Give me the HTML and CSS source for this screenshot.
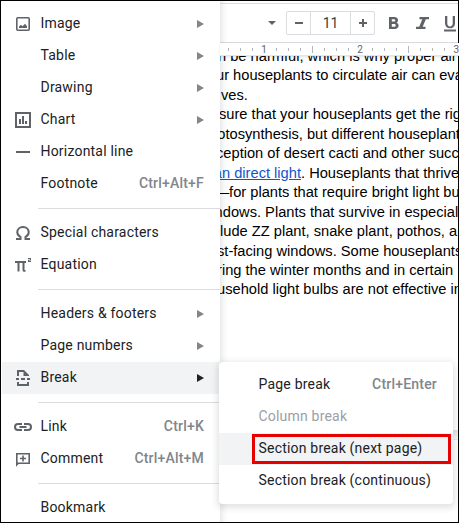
FILE: index.html
```
<!DOCTYPE html>
<html lang="en">
<head>
  <meta charset="UTF-8">
  <meta name="viewport" content="width=device-width, initial-scale=1.0">
  <title>Document</title>
  <link rel="stylesheet" href="styles.css">
</head>
<body>
  <div class="window">
    <div class="editor">
      <div class="toolbar">
        <svg class="caret" width="8" height="4" viewBox="0 0 8 4"><path d="M0 0h8L4 4z"/></svg>
        <div class="font-size">
          <button><svg width="10" height="10" viewBox="0 0 10 10"><path d="M1 5h8"/></svg></button>
          <span>11</span>
          <button><svg width="10" height="10" viewBox="0 0 10 10"><path d="M1 5h8M5 1v8"/></svg></button>
        </div>
        <svg class="format" width="80" height="24" viewBox="0 0 80 24">
          <path fill-rule="evenodd" d="M9 6h5.300c2.200 0 3.700 1.200 3.700 3.200 0 1.100-.6 2-1.400 2.500 1.200.5 2 1.500 2 2.800 0 2.100-1.600 3.500-3.900 3.500H9zM11.800 8.300v2.300H14c.8 0 1.200-.5 1.200-1.200s-.4-1.100-1.200-1.100zM11.800 13v2.700h2.500c.9 0 1.400-.5 1.400-1.300s-.5-1.400-1.400-1.400z"/>
          <path d="M39.500 6H49v2.300h-3.200L42.700 15.700h2.800V18H36v-2.300h3.200l3.100-7.400h-2.800z"/>
          <path d="M65 5h2.300v7.200c0 2 1 3.200 2.700 3.200s2.700-1.200 2.700-3.200V5H75v7.300c0 3.100-2 5-5 5s-5-1.900-5-5zM64 18.500h12v2H64z"/>
        </svg>
      </div>
      <div class="ruler">
        <i></i><i></i><i></i><b>1</b><i></i><i></i><i></i><i class="half"></i><i></i><i></i><i></i><b>2</b><i></i><i></i><i></i><i class="half"></i><i></i><i></i><i></i><b>3</b>
      </div>
      <div class="page">
        <p>n be harmful, which is why proper air</p>
        <p>ur houseplants to circulate air can eva</p>
        <p>ves.</p>
        <p>sure that your houseplants get the rig</p>
        <p>otosynthesis, but different houseplant</p>
        <p>ception of desert cacti and other succ</p>
        <p><a>an direct light</a>. Houseplants that thrive</p>
        <p>—for plants that require bright light bu</p>
        <p>ndows. Plants that survive in especial</p>
        <p>lude ZZ plant, snake plant, pothos, a</p>
        <p>st-facing windows. Some houseplants</p>
        <p>ring the winter months and in certain</p>
        <p>usehold light bulbs are not effective in</p>
      </div>
      <div class="page-gap"></div>
    </div>

    <!-- Insert menu -->
    <div class="menu">
      <div class="item">
        <svg class="icon" viewBox="0 0 18 18"><rect x="2.800" y="2.800" width="12.400" height="12.400" rx="1" class="line"/><path d="M5 13v-1.500L7 9.700l1.500 1.500L11 8.800l2 2.400V13z"/></svg>
        <span>Image</span><em class="arrow"></em>
      </div>
      <div class="item"><span>Table</span><em class="arrow"></em></div>
      <div class="item"><span>Drawing</span><em class="arrow"></em></div>
      <div class="item">
        <svg class="icon" viewBox="0 0 18 18"><path class="line thick" d="M2 2h14v14H2z"/><path d="M5 8h2v5H5zM8 5h2v8H8zM11 10h2v3h-2z"/></svg>
        <span>Chart</span><em class="arrow"></em>
      </div>
      <div class="item">
        <svg class="icon" viewBox="0 0 18 18"><path d="M2 8h14v2H2z"/></svg>
        <span>Horizontal line</span>
      </div>
      <div class="item"><span>Footnote</span><kbd>Ctrl+Alt+F</kbd></div>
      <hr>
      <div class="item">
        <svg class="icon" viewBox="0 0 18 18"><path class="line thick" d="M2 15h4.500v-2C4.500 12 3.300 10.500 3.300 8.300 3.300 5 5.800 3 9 3s5.700 2 5.700 5.300c0 2.200-1.200 3.700-3.200 4.700v2H16"/></svg>
        <span>Special characters</span>
      </div>
      <div class="item">
        <svg class="icon" viewBox="0 0 18 18"><path d="M1 5h11v2h-1.500v6.500c0 .5.300.7 1 .5v1.700c-2 .4-3-.3-3-2V7H5.500v8.500h-2V7H1zM14 2h3v2.500h-2V5h2v1h-3V3.700h2V3h-2z"/></svg>
        <span>Equation</span>
      </div>
      <hr>
      <div class="item"><span>Headers &amp; footers</span><em class="arrow"></em></div>
      <div class="item"><span>Page numbers</span><em class="arrow"></em></div>
      <div class="item active">
        <svg class="icon" viewBox="0 0 18 18"><path d="M3 7V1h7l5 5v1h-5.500V3H5v4zM2 9h3v2H2zM7 9h4v2H7zM13 9h3v2h-3zM3 13h2v2h8v-2h2v4H3z"/></svg>
        <span>Break</span><em class="arrow"></em>
      </div>
      <hr>
      <div class="item">
        <svg class="icon" viewBox="0 0 18 18"><path class="line thick" d="M8 6H4a3 3 0 0 0 0 6h4M10 6h4a3 3 0 0 1 0 6h-4M5.500 9h7"/></svg>
        <span>Link</span><kbd>Ctrl+K</kbd>
      </div>
      <div class="item">
        <svg class="icon" viewBox="0 0 18 18"><path class="line" d="M2.800 14.500V3.800h12.400v9.400H4z"/><path d="M2 16.500V13h3.500zM8.200 5.500h1.600v2.200H12v1.600H9.800v2.200H8.200V9.300H6V7.700h2.200z"/></svg>
        <span>Comment</span><kbd>Ctrl+Alt+M</kbd>
      </div>
      <hr>
      <div class="item"><span>Bookmark</span></div>
    </div>

    <div class="submenu">
      <div class="item"><span>Page break</span><kbd>Ctrl+Enter</kbd></div>
      <div class="item disabled"><span>Column break</span></div>
      <div class="item active highlight"><span>Section break (next page)</span></div>
      <div class="item"><span>Section break (continuous)</span></div>
    </div>
  </div>
</body>
</html>
```
FILE: styles.css
```
* {
  box-sizing: border-box;
}

body {
  margin: 0;
  background: #fff;
}

.window {
  position: relative;
  width: 459px;
  height: 523px;
  overflow: hidden;
  font-family: Roboto, "Liberation Sans", sans-serif;
  font-size: 14px;
  color: #202124;
}

/* frame drawn over everything */
.window::after {
  content: "";
  position: absolute;
  inset: 0;
  border: 1px solid #000;
}

.editor {
  height: 523px;
  padding: 3px 0 0 220px;
  display: flex;
  flex-direction: column;
}

/* toolbar */
.toolbar {
  flex: none;
  display: flex;
  align-items: center;
  height: 40px;
  padding-left: 48px;
  border-top: 1px solid #dadce0;
  border-bottom: 1px solid #dadce0;
  fill: #5f6368;
}

.caret {
  flex: none;
  margin-right: 10px;
}

.font-size {
  flex: none;
  display: flex;
  width: 89px;
  height: 24px;
  border: 1px solid #dadce0;
  border-radius: 2px;
}

.font-size button {
  flex: 1;
  display: flex;
  align-items: center;
  justify-content: center;
  padding: 0;
  border: none;
  background: none;
  stroke: #5f6368;
  stroke-width: 2;
}

.font-size span {
  width: 41px;
  line-height: 22px;
  text-align: center;
  color: #3c4043;
  border-left: 1px solid #dadce0;
  border-right: 1px solid #dadce0;
}

.format {
  flex: none;
  margin-left: 5px;
}

/* ruler */
.ruler {
  flex: none;
  display: flex;
  align-items: center;
  height: 13px;
  padding-left: 2px;
  overflow: hidden;
  background: #fff;
  border-bottom: 1px solid #e3e5e8;
  z-index: 1;
  box-shadow: 0 1px 2px rgba(60, 64, 67, 0.15);
}

.ruler i,
.ruler b {
  flex: none;
  display: flex;
  justify-content: center;
  width: 12.03px;
  font-size: 10px;
  font-weight: normal;
  color: #5f6368;
}

.ruler i::before {
  content: "";
  width: 1px;
  height: 3px;
  background: #b4b7bb;
}

.ruler .half::before {
  height: 7px;
}

/* document text */
.page {
  flex: none;
  height: 383px;
  margin-top: -9px;
  width: 233px;
  font-family: Arial, "Liberation Sans", sans-serif;
  font-size: 14.667px;
  line-height: 19.45px;
  white-space: nowrap;
  color: #000;
}

.page p {
  margin: 0 0 0 -4px;
}

.page p:nth-child(1) { margin-left: -2px; }
.page p:nth-child(3) { margin-left: 1px; }
.page p:nth-child(4) { margin-left: -1px; }
.page p:nth-child(5) { margin-left: -2.7px; }
.page p:nth-child(7) { margin-left: -6.2px; }
.page p:nth-child(8) { margin-left: -5.6px; }
.page p:nth-child(9) { margin-left: -5.4px; }
.page p:nth-child(10) { margin-left: 0; }
.page p:nth-child(11),
.page p:nth-child(12),
.page p:nth-child(13) { margin-left: -3px; }

.page a {
  color: #1155cc;
  text-decoration: underline;
}

.page-gap {
  flex: none;
  height: 10px;
  background: linear-gradient(#dfe1e4, #f8f9fa);
  border-bottom: 1px solid #e8eaed;
}

/* menus */
.menu,
.submenu {
  position: absolute;
  background: #fff;
  box-shadow: 0 2px 6px 2px rgba(60, 64, 67, 0.15);
}

.menu {
  top: -1px;
  left: 0;
  width: 220px;
  height: 540px;
  padding: 9px 0 0 2px;
}

.item {
  display: flex;
  align-items: center;
  height: 32px;
  padding: 0 16px 0 38.5px;
  letter-spacing: 0.2px;
  white-space: nowrap;
}

.item span {
  flex: 1;
  margin-top: -2px;
}

.item.active {
  background: #f1f3f4;
}

.icon {
  width: 18px;
  height: 18px;
  margin: 0 8.5px 0 -26.5px;
  fill: #5f6368;
}

.icon .line {
  fill: none;
  stroke: #5f6368;
  stroke-width: 1.6;
}

.icon .thick {
  stroke-width: 2;
}

.arrow {
  border-left: 7px solid #80868b;
  border-top: 4px solid transparent;
  border-bottom: 4px solid transparent;
}

.active .arrow {
  border-left-color: #202124;
}

kbd {
  margin-top: -2px;
  font-family: inherit;
  font-weight: 500;
  color: #80868b;
}

hr {
  margin: 8px 0 8px 36px;
  border: none;
  border-top: 1px solid #dadce0;
}

.submenu {
  top: 362px;
  left: 219px;
  width: 234px;
  height: 142px;
  padding: 7px 0;
  border-radius: 4px;
}

.submenu .item {
  padding-left: 39.5px;
}

.disabled {
  color: #9aa0a6;
}

.highlight {
  position: relative;
}

.highlight::after {
  content: "";
  position: absolute;
  top: 1px;
  left: 33px;
  right: 2px;
  bottom: 1px;
  border: 3px solid #e60000;
}
```
